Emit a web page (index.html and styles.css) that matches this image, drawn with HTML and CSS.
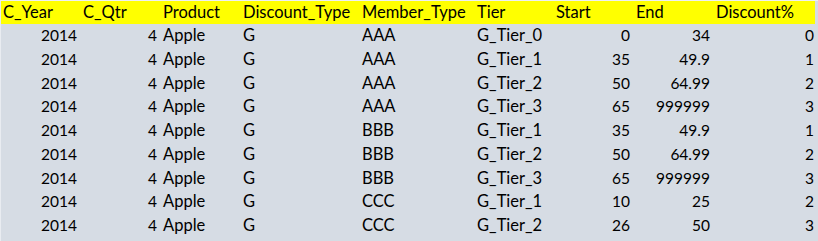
FILE: index.html
```html
<!DOCTYPE html>
<html>
<head>
<meta charset="utf-8">
<link rel="stylesheet" href="styles.css">
</head>
<body>
<div class="sheet">
  <div class="row head">
    <div class="c">C_Year</div>
    <div class="c">C_Qtr</div>
    <div class="c">Product</div>
    <div class="c">Discount_Type</div>
    <div class="c">Member_Type</div>
    <div class="c">Tier</div>
    <div class="c">Start</div>
    <div class="c">End</div>
    <div class="c">Discount%</div>
  </div>
  <div class="row"><div class="c n">2014</div><div class="c n">4</div><div class="c">Apple</div><div class="c">G</div><div class="c">AAA</div><div class="c">G_Tier_0</div><div class="c n">0</div><div class="c n">34</div><div class="c n">0</div></div>
  <div class="row"><div class="c n">2014</div><div class="c n">4</div><div class="c">Apple</div><div class="c">G</div><div class="c">AAA</div><div class="c">G_Tier_1</div><div class="c n">35</div><div class="c n">49.9</div><div class="c n">1</div></div>
  <div class="row"><div class="c n">2014</div><div class="c n">4</div><div class="c">Apple</div><div class="c">G</div><div class="c">AAA</div><div class="c">G_Tier_2</div><div class="c n">50</div><div class="c n">64.99</div><div class="c n">2</div></div>
  <div class="row"><div class="c n">2014</div><div class="c n">4</div><div class="c">Apple</div><div class="c">G</div><div class="c">AAA</div><div class="c">G_Tier_3</div><div class="c n">65</div><div class="c n">999999</div><div class="c n">3</div></div>
  <div class="row"><div class="c n">2014</div><div class="c n">4</div><div class="c">Apple</div><div class="c">G</div><div class="c">BBB</div><div class="c">G_Tier_1</div><div class="c n">35</div><div class="c n">49.9</div><div class="c n">1</div></div>
  <div class="row"><div class="c n">2014</div><div class="c n">4</div><div class="c">Apple</div><div class="c">G</div><div class="c">BBB</div><div class="c">G_Tier_2</div><div class="c n">50</div><div class="c n">64.99</div><div class="c n">2</div></div>
  <div class="row"><div class="c n">2014</div><div class="c n">4</div><div class="c">Apple</div><div class="c">G</div><div class="c">BBB</div><div class="c">G_Tier_3</div><div class="c n">65</div><div class="c n">999999</div><div class="c n">3</div></div>
  <div class="row"><div class="c n">2014</div><div class="c n">4</div><div class="c">Apple</div><div class="c">G</div><div class="c">CCC</div><div class="c">G_Tier_1</div><div class="c n">10</div><div class="c n">25</div><div class="c n">2</div></div>
  <div class="row"><div class="c n">2014</div><div class="c n">4</div><div class="c">Apple</div><div class="c">G</div><div class="c">CCC</div><div class="c">G_Tier_2</div><div class="c n">26</div><div class="c n">50</div><div class="c n">3</div></div>
</div>
</body>
</html>
```
FILE: styles.css
```css
html, body {
  margin: 0;
  padding: 0;
  background: #d6dce4;
}
body {
  width: 818px;
  height: 241px;
  overflow: hidden;
  font-family: Lato, "Open Sans", sans-serif;
  font-size: 16.5px;
  color: #000;
}
.sheet {
  border-left: 1px solid #e9ecf1;
  border-top: 1px solid #eef0f3;
  height: 240px;
}
.row {
  display: grid;
  grid-template-columns: 80px 80px 80px 119px 115px 79px 80px 80px 104px;
  height: 23.75px;
  line-height: 23.75px;
}
.row.head {
  height: 23px;
  line-height: 23px;
  background: #ffff00;
  margin-right: 3px;
}
.c {
  padding: 0 4px 0 2px;
  white-space: nowrap;
  overflow: hidden;
}
.n {
  text-align: right;
  font-size: 15.5px;
}
```
